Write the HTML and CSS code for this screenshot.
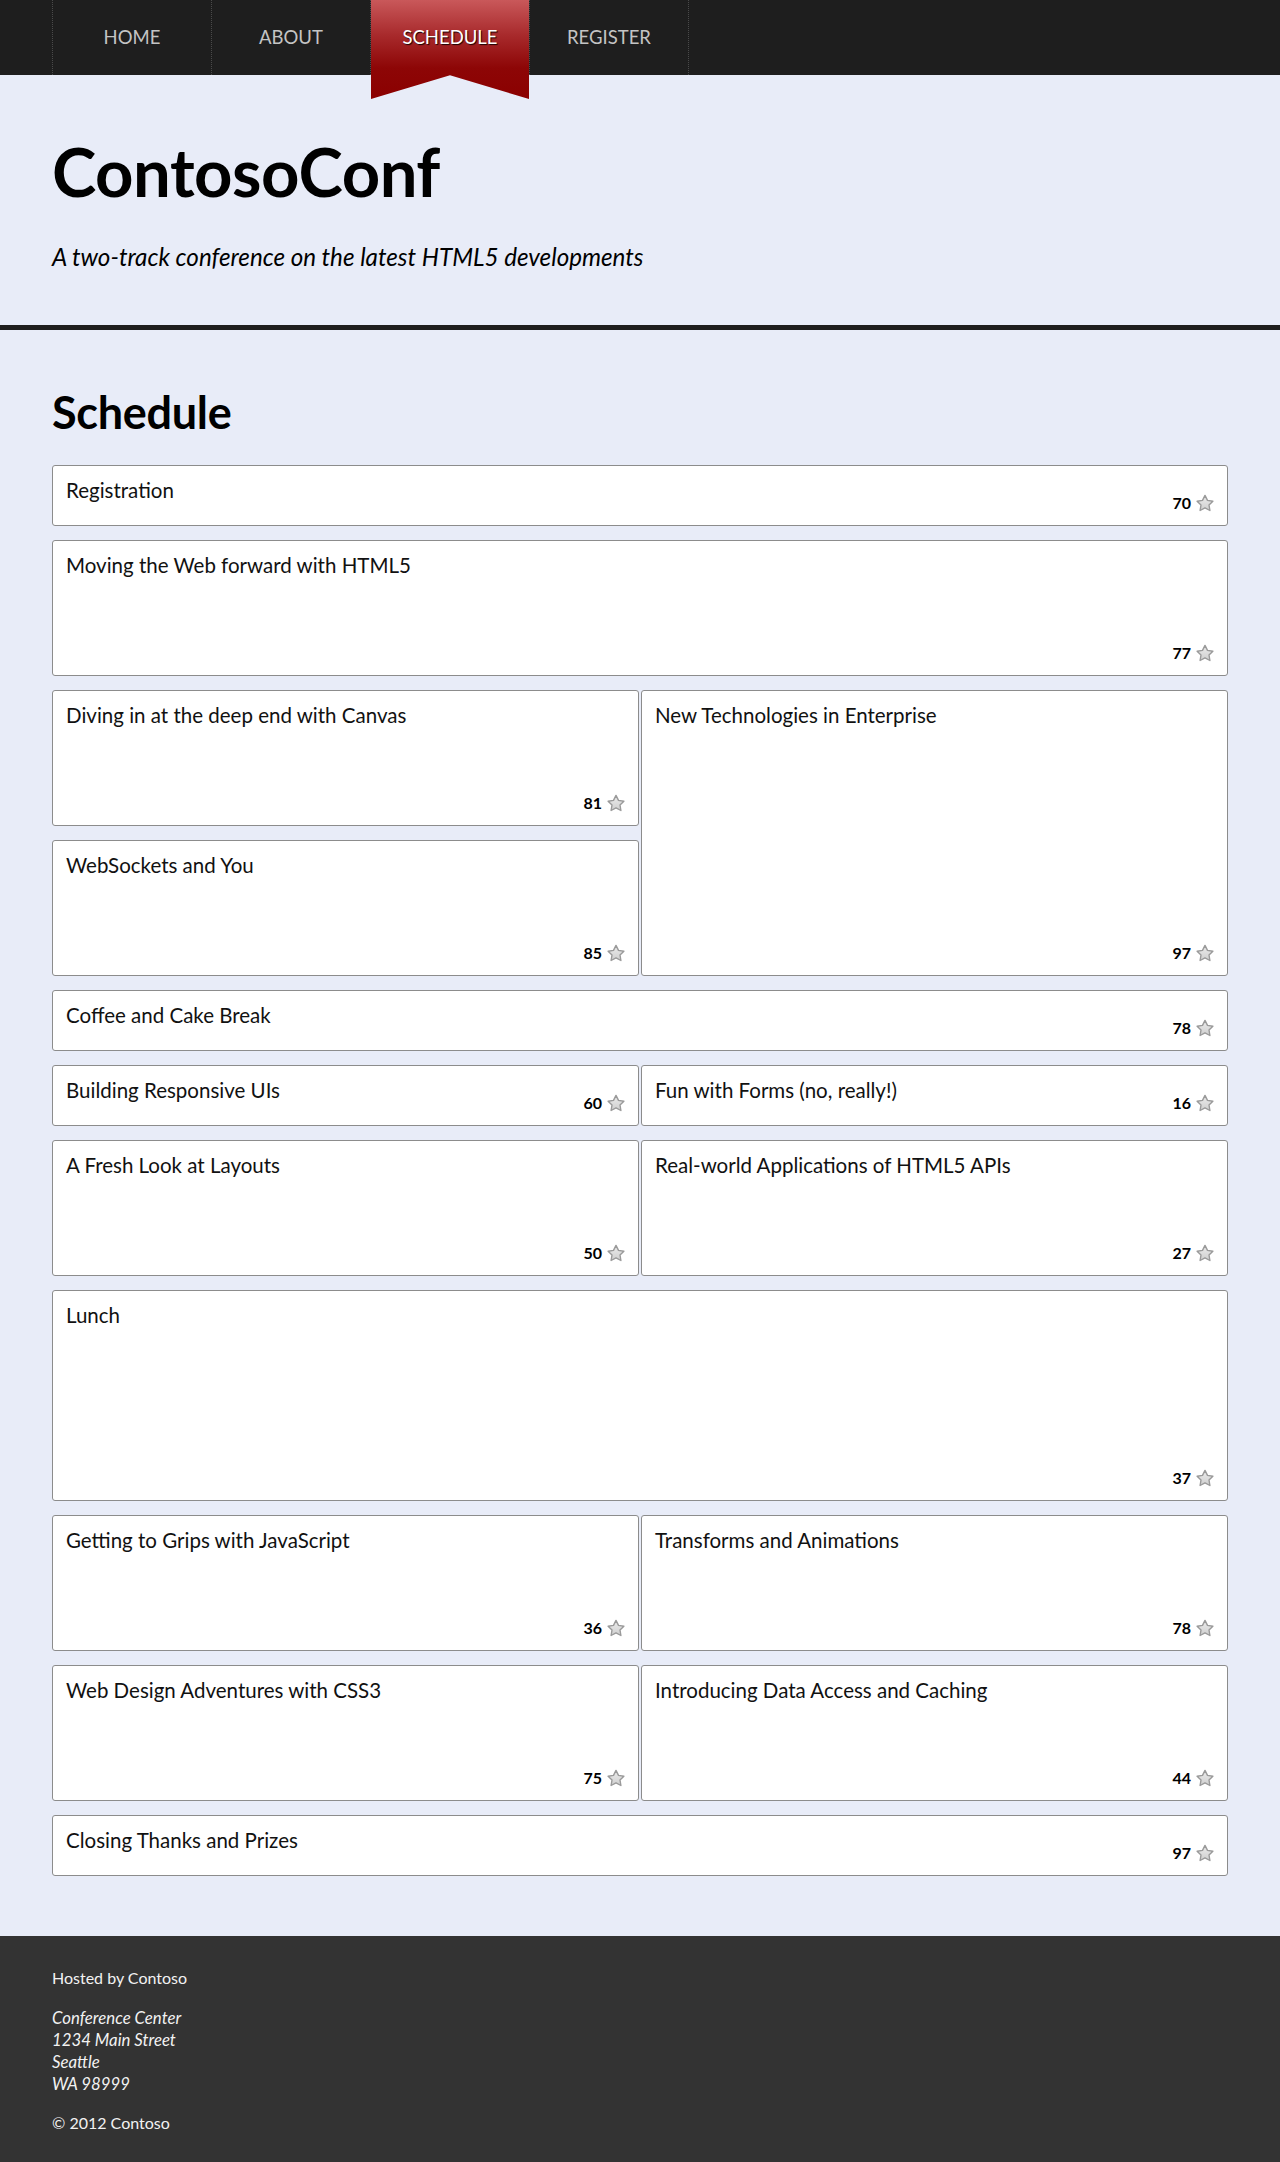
FILE: index.html
```html
<!DOCTYPE html>
<html lang="en">
<head>
<meta charset="utf-8">
<title>ContosoConf - Schedule</title>
<link rel="stylesheet" href="styles.css">
</head>
<body>
<nav class="topnav">
  <ul class="nav-list">
    <li class="nav-item"><a href="#">HOME</a></li>
    <li class="nav-item"><a href="#">ABOUT</a></li>
    <li class="nav-item nav-current"><a href="#">SCHEDULE</a></li>
    <li class="nav-item"><a href="#">REGISTER</a></li>
  </ul>
</nav>
<header class="page-header">
  <div class="container">
    <h1 class="site-title">ContosoConf</h1>
    <p class="tagline">A two-track conference on the latest HTML5 developments</p>
  </div>
</header>
<main class="page-main">
  <div class="container">
    <h2 class="section-title">Schedule</h2>
    <ul class="schedule">
      <li class="session full"><span class="title">Registration</span><span class="rating"><span class="count">70</span><svg class="star" viewBox="0 0 18 18"><use href="#star"/></svg></span></li>
      <li class="session full span2"><span class="title">Moving the Web forward with HTML5</span><span class="rating"><span class="count">77</span><svg class="star" viewBox="0 0 18 18"><use href="#star"/></svg></span></li>
      <li class="session left span2"><span class="title">Diving in at the deep end with Canvas</span><span class="rating"><span class="count">81</span><svg class="star" viewBox="0 0 18 18"><use href="#star"/></svg></span></li>
      <li class="session right span4"><span class="title">New Technologies in Enterprise</span><span class="rating"><span class="count">97</span><svg class="star" viewBox="0 0 18 18"><use href="#star"/></svg></span></li>
      <li class="session left span2"><span class="title">WebSockets and You</span><span class="rating"><span class="count">85</span><svg class="star" viewBox="0 0 18 18"><use href="#star"/></svg></span></li>
      <li class="session full"><span class="title">Coffee and Cake Break</span><span class="rating"><span class="count">78</span><svg class="star" viewBox="0 0 18 18"><use href="#star"/></svg></span></li>
      <li class="session left"><span class="title">Building Responsive UIs</span><span class="rating"><span class="count">60</span><svg class="star" viewBox="0 0 18 18"><use href="#star"/></svg></span></li>
      <li class="session right"><span class="title">Fun with Forms (no, really!)</span><span class="rating"><span class="count">16</span><svg class="star" viewBox="0 0 18 18"><use href="#star"/></svg></span></li>
      <li class="session left span2"><span class="title">A Fresh Look at Layouts</span><span class="rating"><span class="count">50</span><svg class="star" viewBox="0 0 18 18"><use href="#star"/></svg></span></li>
      <li class="session right span2"><span class="title">Real-world Applications of HTML5 APIs</span><span class="rating"><span class="count">27</span><svg class="star" viewBox="0 0 18 18"><use href="#star"/></svg></span></li>
      <li class="session full span3"><span class="title">Lunch</span><span class="rating"><span class="count">37</span><svg class="star" viewBox="0 0 18 18"><use href="#star"/></svg></span></li>
      <li class="session left span2"><span class="title">Getting to Grips with JavaScript</span><span class="rating"><span class="count">36</span><svg class="star" viewBox="0 0 18 18"><use href="#star"/></svg></span></li>
      <li class="session right span2"><span class="title">Transforms and Animations</span><span class="rating"><span class="count">78</span><svg class="star" viewBox="0 0 18 18"><use href="#star"/></svg></span></li>
      <li class="session left span2"><span class="title">Web Design Adventures with CSS3</span><span class="rating"><span class="count">75</span><svg class="star" viewBox="0 0 18 18"><use href="#star"/></svg></span></li>
      <li class="session right span2"><span class="title">Introducing Data Access and Caching</span><span class="rating"><span class="count">44</span><svg class="star" viewBox="0 0 18 18"><use href="#star"/></svg></span></li>
      <li class="session full"><span class="title">Closing Thanks and Prizes</span><span class="rating"><span class="count">97</span><svg class="star" viewBox="0 0 18 18"><use href="#star"/></svg></span></li>
    </ul>
  </div>
</main>
<footer class="page-footer">
  <div class="container">
    <p class="host">Hosted by Contoso</p>
    <address class="address">Conference Center<br>1234 Main Street<br>Seattle<br>WA 98999</address>
    <p class="copy">&copy; 2012 Contoso</p>
  </div>
</footer>
<svg class="defs" width="0" height="0" aria-hidden="true">
  <defs>
    <linearGradient id="starfill" x1="0" y1="0" x2="0" y2="1">
      <stop offset="0" stop-color="#ececec"/>
      <stop offset="1" stop-color="#cfcfcf"/>
    </linearGradient>
    <symbol id="star" viewBox="0 0 18 18">
      <polygon points="9,1.4 11.5,6.4 16.9,7.2 13,11 13.9,16.5 9,13.9 4.1,16.5 5,11 1.1,7.2 6.5,6.4" fill="url(#starfill)" stroke="#9a9a9a" stroke-width="1.4" stroke-linejoin="round"/>
    </symbol>
  </defs>
</svg>
</body>
</html>
```

FILE: styles.css
```css
html, body {
  margin: 0;
  padding: 0;
}

body {
  font-family: Lato, "Open Sans", "DejaVu Sans", sans-serif;
  background: #e8ecf8;
  color: #000;
}

.container {
  width: 1176px;
  margin: 0 auto;
}

/* ---------- top navigation ---------- */
.topnav {
  background: #1e1e1e;
  height: 75px;
  position: relative;
  z-index: 2;
}

.nav-list {
  list-style: none;
  margin: 0;
  padding: 0 0 0 52px;
  display: flex;
  height: 75px;
}

.nav-item {
  width: 158px;
  height: 75px;
  border-left: 1px dotted #4a4a4a;
  position: relative;
}

.nav-item:last-child {
  border-right: 1px dotted #4a4a4a;
}

.nav-item a {
  position: relative;
  z-index: 1;
  display: flex;
  align-items: center;
  justify-content: center;
  height: 75px;
  color: #c4c4c4;
  text-decoration: none;
  font-size: 18.5px;
  letter-spacing: 0;
  padding-bottom: 1px;
  box-sizing: border-box;
}

.nav-current::before {
  content: "";
  position: absolute;
  left: 0;
  top: 0;
  width: 158px;
  height: 99px;
  background: linear-gradient(to bottom, #c9585a 0px, #a82a2c 35px, #8d0606 68px, #8b0000 99px);
  clip-path: polygon(0 0, 100% 0, 100% 100%, 50% 76%, 0 100%);
}

.nav-current a {
  color: #fff;
  text-shadow: 1px 1px 1px #1a0000;
}

/* ---------- header ---------- */
.page-header {
  background: #e8ecf8;
  border-bottom: 5px solid #1e1e1e;
  padding: 57px 0 54px;
}

.site-title {
  margin: 0;
  font-size: 67px;
  line-height: 79px;
  font-weight: 700;
  letter-spacing: -0.5px;
}

.tagline {
  margin: 32px 0 0;
  font-size: 24.2px;
  line-height: 28px;
  font-style: italic;
}

/* ---------- main ---------- */
.page-main {
  padding: 55px 0 60px;
}

.section-title {
  margin: 0 0 26px;
  font-size: 45px;
  line-height: 54px;
  font-weight: 700;
  letter-spacing: -0.3px;
}

.schedule {
  list-style: none;
  margin: 0;
  padding: 0;
  display: grid;
  grid-template-columns: 1fr 1fr;
  grid-auto-rows: 61px;
  column-gap: 2px;
  row-gap: 14px;
}

.session {
  display: grid;
  grid-template-columns: 1fr;
  grid-template-rows: 1fr;
  background: #fff;
  border: 1px solid #8c8c8c;
  border-radius: 3px;
  padding: 11px 13px 13px 13px;
  min-width: 0;
}

.session.full { grid-column: 1 / -1; }
.session.left { grid-column: 1; }
.session.right { grid-column: 2; }
.session.span2 { grid-row: span 2; }
.session.span3 { grid-row: span 3; }
.session.span4 { grid-row: span 4; }

.title {
  grid-area: 1 / 1;
  align-self: start;
  justify-self: start;
  font-size: 20.5px;
  line-height: 26px;
  color: #111;
}

.rating {
  grid-area: 1 / 1;
  align-self: end;
  justify-self: end;
  display: flex;
  align-items: center;
  height: 18px;
}

.count {
  font-size: 16px;
  font-weight: 700;
  color: #000;
  line-height: 18px;
  margin-right: 5px;
}

.star {
  width: 18px;
  height: 18px;
  display: block;
}

/* ---------- footer ---------- */
.page-footer {
  background: #333;
  color: #f2f2f2;
  padding: 31px 0 28px;
  font-size: 16px;
  line-height: 22px;
}

.host {
  margin: 0 0 18px;
}

.address {
  font-style: italic;
  font-size: 16.8px;
  margin: 0 0 17px;
}

.copy {
  margin: 0;
}

.defs {
  position: absolute;
  width: 0;
  height: 0;
  overflow: hidden;
}
```
